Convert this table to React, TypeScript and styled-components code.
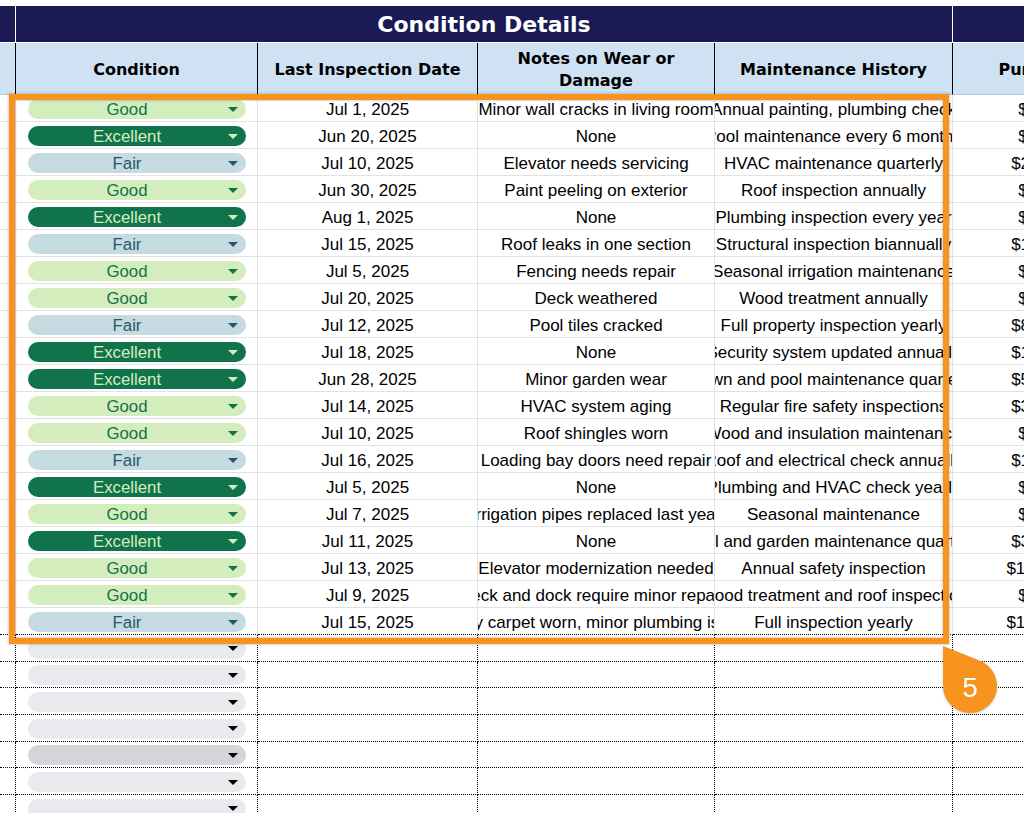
import React from "react";
import styled, { createGlobalStyle } from "styled-components";

const COLS = "16px 242px 220px 237px 238px 226px";

const GlobalStyle = createGlobalStyle`
  html, body {
    margin: 0;
    padding: 0;
    background: #ffffff;
    overflow: hidden;
  }
  body {
    font-family: "Liberation Sans", Arial, sans-serif;
  }
`;

const Page = styled.div`
  position: relative;
  width: 1024px;
  height: 813px;
  overflow: hidden;
  padding-top: 6px;
  box-sizing: border-box;
`;

const Row = styled.div<{ $h: number }>`
  display: grid;
  grid-template-columns: ${COLS};
  height: ${(p) => p.$h}px;
  width: max-content;
`;

const Banner = styled.div<{ $span?: number }>`
  grid-column: span ${(p) => p.$span ?? 1};
  background: #1c1a55;
  border-right: 1px solid #ffffff;
  border-bottom: 1px solid #ffffff;
  box-sizing: border-box;
  color: #ffffff;
  font: 700 22px "DejaVu Sans", sans-serif;
  display: flex;
  align-items: center;
  justify-content: center;
`;

const HeadCell = styled.div`
  background: #cfe2f3;
  border-right: 1px solid #000000;
  border-bottom: 1px solid #b9c9d8;
  box-sizing: border-box;
  padding: 3px 6px 0;
  display: flex;
  align-items: center;
  justify-content: center;
  text-align: center;
  font: 700 16px/22px "DejaVu Sans", sans-serif;
  color: #000000;
  overflow: hidden;
`;

const Cell = styled.div<{ $dotted?: boolean; $dottedBottom?: boolean; $pad?: boolean }>`
  display: flex;
  align-items: flex-end;
  justify-content: center;
  overflow: hidden;
  white-space: nowrap;
  box-sizing: border-box;
  padding: ${(p) => (p.$pad ? "0 11px 1px 12px" : "0 0 1px 0")};
  border-right: 1px ${(p) => (p.$dotted ? "dotted #000000" : "solid #e2e2e2")};
  border-bottom: 1px
    ${(p) => (p.$dotted || p.$dottedBottom ? "dotted #000000" : "solid #e2e2e2")};
  font-size: 17px;
  line-height: 21px;
  color: #000000;
`;

const CellText = styled.span`
  flex-shrink: 0;
`;

const Chip = styled.div<{ $bg: string; $fg: string }>`
  flex: 1;
  height: 20px;
  margin-bottom: 1px;
  border-radius: 10px;
  background: ${(p) => p.$bg};
  color: ${(p) => p.$fg};
  display: flex;
  align-items: center;
  padding: 0 8px;
  box-sizing: border-box;
`;

const ChipLabel = styled.span`
  flex: 1;
  text-align: center;
  font-size: 16.8px;
  line-height: 20px;
  padding-top: 1px;
`;

const Caret = styled.span<{ $color: string }>`
  width: 0;
  height: 0;
  margin-left: 10px;
  border-left: 5px solid transparent;
  border-right: 5px solid transparent;
  border-top: 5px solid ${(p) => p.$color};
`;

const Frame = styled.div`
  position: absolute;
  left: 9px;
  top: 94px;
  width: 940px;
  height: 550px;
  box-sizing: border-box;
  border: 6px solid #f7931e;
  box-shadow: 0 0 2px 1px rgba(0, 0, 0, 0.16), inset 0 0 2px 1px rgba(0, 0, 0, 0.16);
  pointer-events: none;
`;

const Badge = styled.svg`
  position: absolute;
  left: 943px;
  top: 646px;
  overflow: visible;
  filter: drop-shadow(0 1px 1px rgba(0, 0, 0, 0.2));
`;

type Condition = "Excellent" | "Good" | "Fair";

const tones: Record<Condition | "empty" | "emptyHover", { bg: string; fg: string }> = {
  Excellent: { bg: "#11734b", fg: "#d4edbc" },
  Good: { bg: "#d4edbc", fg: "#11734b" },
  Fair: { bg: "#c6dbe1", fg: "#215a6c" },
  empty: { bg: "#e8eaed", fg: "#000000" },
  emptyHover: { bg: "#d3d5d8", fg: "#000000" },
};

const rows: [Condition, string, string, string, string][] = [
  ["Good", "Jul 1, 2025", "Minor wall cracks in living room", "Annual painting, plumbing check", "$450,000.00"],
  ["Excellent", "Jun 20, 2025", "None", "Pool maintenance every 6 months", "$750,000.00"],
  ["Fair", "Jul 10, 2025", "Elevator needs servicing", "HVAC maintenance quarterly", "$2,300,000.00"],
  ["Good", "Jun 30, 2025", "Paint peeling on exterior", "Roof inspection annually", "$380,000.00"],
  ["Excellent", "Aug 1, 2025", "None", "Plumbing inspection every year", "$620,000.00"],
  ["Fair", "Jul 15, 2025", "Roof leaks in one section", "Structural inspection biannually", "$1,500,000.00"],
  ["Good", "Jul 5, 2025", "Fencing needs repair", "Seasonal irrigation maintenance", "$290,000.00"],
  ["Good", "Jul 20, 2025", "Deck weathered", "Wood treatment annually", "$410,000.00"],
  ["Fair", "Jul 12, 2025", "Pool tiles cracked", "Full property inspection yearly", "$8,400,000.00"],
  ["Excellent", "Jul 18, 2025", "None", "Security system updated annually", "$1,100,000.00"],
  ["Excellent", "Jun 28, 2025", "Minor garden wear", "Lawn and pool maintenance quarterly", "$5,600,000.00"],
  ["Good", "Jul 14, 2025", "HVAC system aging", "Regular fire safety inspections", "$3,200,000.00"],
  ["Good", "Jul 10, 2025", "Roof shingles worn", "Wood and insulation maintenance", "$520,000.00"],
  ["Fair", "Jul 16, 2025", "Loading bay doors need repair", "Roof and electrical check annually", "$1,800,000.00"],
  ["Excellent", "Jul 5, 2025", "None", "Plumbing and HVAC check yearly", "$690,000.00"],
  ["Good", "Jul 7, 2025", "Irrigation pipes replaced last year", "Seasonal maintenance", "$470,000.00"],
  ["Excellent", "Jul 11, 2025", "None", "Pool and garden maintenance quarterly", "$3,900,000.00"],
  ["Good", "Jul 13, 2025", "Elevator modernization needed", "Annual safety inspection", "$12,500,000.00"],
  ["Good", "Jul 9, 2025", "Deck and dock require minor repairs", "Wood treatment and roof inspection", "$560,000.00"],
  ["Fair", "Jul 15, 2025", "Lobby carpet worn, minor plumbing issues", "Full inspection yearly", "$15,000,000.00"],
];

const StatusChip: React.FC<{ tone: keyof typeof tones; label?: string }> = ({ tone, label }) => {
  const t = tones[tone];
  return (
    <Chip $bg={t.bg} $fg={t.fg}>
      <ChipLabel>{label}</ChipLabel>
      <Caret $color={t.fg} />
    </Chip>
  );
};

const App: React.FC = () => {
  return (
    <>
      <GlobalStyle />
      <Page>
        {/* Section banner */}
        <Row $h={37}>
          <Banner />
          <Banner $span={4}>Condition Details</Banner>
          <Banner />
        </Row>

        {/* Column headers */}
        <Row $h={52}>
          <HeadCell />
          <HeadCell>Condition</HeadCell>
          <HeadCell>Last Inspection Date</HeadCell>
          <HeadCell>Notes on Wear or Damage</HeadCell>
          <HeadCell>Maintenance History</HeadCell>
          <HeadCell>Purchase Price</HeadCell>
        </Row>

        {/* Filled rows */}
        {rows.map(([cond, date, notes, history, price], i) => {
          const last = i === rows.length - 1;
          return (
            <Row $h={27} key={i}>
              <Cell $dottedBottom={last} />
              <Cell $dottedBottom={last} $pad>
                <StatusChip tone={cond} label={cond} />
              </Cell>
              <Cell $dottedBottom={last}>
                <CellText>{date}</CellText>
              </Cell>
              <Cell $dottedBottom={last}>
                <CellText>{notes}</CellText>
              </Cell>
              <Cell $dottedBottom={last}>
                <CellText>{history}</CellText>
              </Cell>
              <Cell $dottedBottom={last}>
                <CellText>{price}</CellText>
              </Cell>
            </Row>
          );
        })}

        {/* Empty rows with dotted borders */}
        {Array.from({ length: 8 }).map((_, i) => (
          <Row $h={26.7} key={`e${i}`}>
            <Cell $dotted />
            <Cell $dotted $pad>
              <StatusChip tone={i === 4 ? "emptyHover" : "empty"} />
            </Cell>
            <Cell $dotted />
            <Cell $dotted />
            <Cell $dotted />
            <Cell $dotted />
          </Row>
        ))}

        {/* Highlight annotation */}
        <Frame />
        <Badge width="54" height="68" viewBox="0 0 54 68">
          <path d="M0 0 L0 40 A27 27 0 1 0 37 14.85 Z" fill="#f7931e" />
          <text
            x="27"
            y="51"
            textAnchor="middle"
            fill="#ffffff"
            fontSize="28"
            fontFamily="Liberation Sans, Arial, sans-serif"
          >
            5
          </text>
        </Badge>
      </Page>
    </>
  );
};

export default App;
